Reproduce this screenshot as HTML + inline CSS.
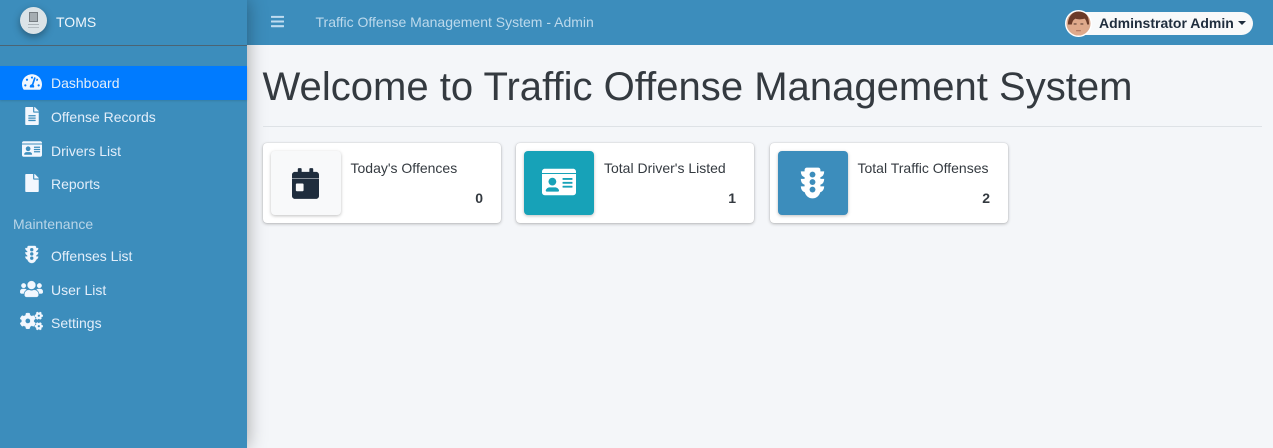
<!DOCTYPE html>
<html lang="en"><head><meta charset="utf-8"><title>TOMS</title>
<style>
html,body{margin:0;padding:0;width:1273px;height:448px;overflow:hidden;background:#f4f6f9;font-family:"Liberation Sans",sans-serif;color:#343a40}
.a{position:absolute;white-space:nowrap}
#nav{left:247px;top:0;width:1026px;height:45px;background:#3c8dbc}
#side{left:0;top:0;width:247px;height:448px;background:#3c8dbc;box-shadow:0 0 18px rgba(0,0,0,.35)}
#line{left:0;top:45px;width:247px;height:1px;background:#4b6474}
#act{left:0;top:66px;width:247px;height:34px;background:#007bff;box-shadow:0 1px 2px rgba(0,0,0,.12)}
.t{left:51px;font-size:14px;line-height:20px;color:#e3eefa}
svg{position:absolute;fill:#f2f7fe;stroke:#f2f7fe;stroke-width:12;display:block;overflow:visible}
.h{stroke:none;fill:#3c8dbc}
.card{top:143px;width:238px;height:80px;background:#fff;border-radius:4px;box-shadow:0 0 1px rgba(0,0,0,.2),0 1px 3px rgba(0,0,0,.25)}
.box{left:8px;top:8px;width:70px;height:64px;border-radius:4px;box-shadow:0 1px 3px rgba(0,0,0,.25)}
.ct{left:87.5px;top:15px;font-size:14px;line-height:20px;color:#343a40}
.n{right:18px;top:45px;font-size:14px;line-height:20px;font-weight:700;color:#343a40}
</style></head><body>
<div class="a" id="nav">
<svg style="left:24px;top:14px;fill:#bfdcf0;stroke:none" width="13" height="15" viewBox="0 0 448 512"><path d="M16 132h416c8.837 0 16-7.163 16-16V76c0-8.837-7.163-16-16-16H16C7.163 60 0 67.163 0 76v40c0 8.837 7.163 16 16 16zm0 160h416c8.837 0 16-7.163 16-16v-40c0-8.837-7.163-16-16-16H16c-8.837 0-16 7.163-16 16v40c0 8.837 7.163 16 16 16zm0 160h416c8.837 0 16-7.163 16-16v-40c0-8.837-7.163-16-16-16H16c-8.837 0-16 7.163-16 16v40c0 8.837 7.163 16 16 16z"/></svg>
<div class="a" style="left:68.5px;top:12px;font-size:14px;line-height:20px;color:#bcd9ec">Traffic Offense Management System - Admin</div>
</div>
<div class="a" id="side">
<div class="a" style="left:20px;top:7px;width:27px;height:27px;border-radius:50%;background:#dbe3e7;box-shadow:0 3px 8px rgba(0,0,0,.35)"></div>
<div class="a" style="left:29px;top:12px;width:9px;height:10px;background:#a5adb2;border:1px solid #767d82;box-sizing:border-box"></div>
<div class="a" style="left:28px;top:24px;width:11px;height:1px;background:#aab2b7"></div>
<div class="a" style="left:28px;top:27px;width:11px;height:1px;background:#b5bdc2"></div>
<div class="a" style="left:56px;top:12px;font-size:14px;line-height:20px;color:#f0f6fc">TOMS</div>
<div class="a" id="line"></div>
<div class="a" id="act"></div>

<svg style="left:21.5px;top:73px;stroke:none" width="20" height="18" viewBox="0 0 576 512"><path d="M288 32C128.94 32 0 160.94 0 320c0 52.8 14.25 102.26 39.06 144.8 5.61 9.62 16.3 15.2 27.44 15.2h443c11.14 0 21.83-5.58 27.44-15.2C561.75 422.26 576 372.8 576 320c0-159.06-128.94-288-288-288zm0 64c14.71 0 26.58 10.13 30.32 23.65-1.11 2.26-2.64 4.23-3.45 6.67l-9.22 27.67c-5.13 3.49-10.97 6.01-17.64 6.01-17.67 0-32-14.33-32-32S270.33 96 288 96zM96 384c-17.67 0-32-14.33-32-32s14.33-32 32-32 32 14.33 32 32-14.33 32-32 32zm48-160c-17.67 0-32-14.33-32-32s14.33-32 32-32 32 14.33 32 32-14.33 32-32 32zm246.77-72.41l-61.33 184C343.13 347.33 352 364.54 352 384c0 11.72-3.38 22.55-8.88 32H232.88c-5.5-9.45-8.88-20.28-8.88-32 0-33.94 26.5-61.43 59.9-63.59l61.34-184.01c4.17-12.56 17.73-19.45 30.36-15.17 12.57 4.19 19.35 17.79 15.17 30.36zm14.66 57.2l15.52-46.55c3.47-1.29 7.13-2.23 11.05-2.23 17.67 0 32 14.33 32 32s-14.33 32-32 32c-11.38-.01-20.89-6.28-26.57-15.22zM480 384c-17.67 0-32-14.33-32-32s14.33-32 32-32 32 14.33 32 32-14.33 32-32 32z"/></svg>
<div class="a t" style="top:73px">Dashboard</div>

<svg style="left:24.5px;top:106.5px;stroke:none" width="14" height="18" viewBox="0 0 384 512"><path d="M224 136V0H24C10.7 0 0 10.7 0 24v464c0 13.3 10.7 24 24 24h336c13.3 0 24-10.7 24-24V160H248c-13.2 0-24-10.8-24-24zm160-14.1v6.1H256V0h6.1c6.4 0 12.5 2.5 17 7l97.9 98c4.5 4.5 7 10.6 7 16.9z"/><g class="h"><rect x="88" y="232" width="208" height="36" rx="8"/><rect x="88" y="298" width="208" height="36" rx="8"/><rect x="88" y="364" width="208" height="36" rx="8"/></g></svg>
<div class="a t" style="top:107px">Offense Records</div>

<svg style="left:21.5px;top:140px;stroke:none" width="20" height="18" viewBox="0 0 576 512"><path d="M528 32H48C21.5 32 0 53.5 0 80v16h576V80c0-26.5-21.5-48-48-48zM0 432c0 26.5 21.5 48 48 48h480c26.5 0 48-21.5 48-48V128H0v304z"/><g class="h"><rect x="344" y="186" width="176" height="36" rx="6"/><rect x="344" y="252" width="176" height="36" rx="6"/><rect x="344" y="318" width="176" height="36" rx="6"/><circle cx="176" cy="250" r="68"/><path d="M62 396C72 366 98 346 128 346h96c30 0 56 20 66 50 3 12-5 26-18 26H80c-13 0-21-14-18-26z"/></g></svg>
<div class="a t" style="top:141px">Drivers List</div>

<svg style="left:24.5px;top:174px;stroke:none" width="14" height="18" viewBox="0 0 384 512"><path d="M224 136V0H24C10.7 0 0 10.7 0 24v464c0 13.3 10.7 24 24 24h336c13.3 0 24-10.7 24-24V160H248c-13.2 0-24-10.8-24-24zm160-14.1v6.1H256V0h6.1c6.4 0 12.5 2.5 17 7l97.9 98c4.5 4.5 7 10.6 7 16.9z"/></svg>
<div class="a t" style="top:174px">Reports</div>

<div class="a" style="left:13px;top:214px;font-size:14px;line-height:20px;color:#b9d5e8">Maintenance</div>

<svg style="left:24.5px;top:246px" width="13.5" height="17" viewBox="0 0 384 512"><path d="M384 192h-64v-37.88c37.2-13.22 64-48.38 64-90.12h-64V32c0-17.67-14.33-32-32-32H96C78.33 0 64 14.33 64 32v32H0c0 41.74 26.8 76.9 64 90.12V192H0c0 41.74 26.8 76.9 64 90.12V320H0c0 42.84 28.25 78.69 66.99 91.05C79.42 468.72 130.6 512 192 512s112.58-43.28 125.01-100.95C355.75 398.69 384 362.84 384 320h-64v-37.88c37.2-13.22 64-48.38 64-90.12z"/><g class="h"><circle cx="192" cy="112" r="50"/><circle cx="192" cy="240" r="50"/><circle cx="192" cy="368" r="50"/></g></svg>
<div class="a t" style="top:246px">Offenses List</div>

<svg style="left:20px;top:279.5px" width="23" height="18" viewBox="0 0 640 512"><path d="M96 224c35.3 0 64-28.7 64-64s-28.7-64-64-64-64 28.7-64 64 28.7 64 64 64zm448 0c35.3 0 64-28.7 64-64s-28.7-64-64-64-64 28.7-64 64 28.7 64 64 64zm32 32h-64c-17.6 0-33.5 7.1-45.1 18.6 40.3 22.1 68.9 62 75.1 109.4h66c17.7 0 32-14.3 32-32v-32c0-35.3-28.7-64-64-64zm-256 0c61.9 0 112-50.1 112-112S381.9 32 320 32 208 82.1 208 144s50.1 112 112 112zm76.8 32h-8.3c-20.8 10-43.9 16-68.5 16s-47.6-6-68.5-16h-8.3C179.6 288 128 339.6 128 403.2V432c0 26.5 21.5 48 48 48h288c26.5 0 48-21.5 48-48v-28.8c0-63.6-51.6-115.2-115.2-115.2zm-223.7-13.4C161.5 263.1 145.6 256 128 256H64c-35.3 0-64 28.7-64 64v32c0 17.7 14.3 32 32 32h65.9c6.3-47.4 34.9-87.3 75.2-109.4z"/></svg>
<div class="a t" style="top:280px">User List</div>

<svg style="left:20px;top:312px" width="23" height="18" viewBox="0 0 640 512"><path d="M512.1 191l-8.2 14.3c-3 5.3-9.4 7.5-15.1 5.4-11.8-4.4-22.6-10.7-32.1-18.6-4.6-3.8-5.8-10.5-2.8-15.7l8.2-14.3c-6.9-8-12.3-17.3-15.9-27.4h-16.5c-6 0-11.2-4.3-12.2-10.3-2-12-2.1-24.6 0-37.1 1-6 6.2-10.4 12.2-10.4h16.5c3.6-10.1 9-19.4 15.9-27.4l-8.2-14.3c-3-5.2-1.9-11.9 2.8-15.7 9.5-7.9 20.4-14.2 32.1-18.6 5.7-2.1 12.1.1 15.1 5.4l8.2 14.3c10.5-1.9 21.2-1.9 31.7 0L552 6.3c3-5.3 9.4-7.5 15.1-5.4 11.8 4.4 22.6 10.7 32.1 18.6 4.6 3.8 5.8 10.5 2.8 15.7l-8.2 14.3c6.9 8 12.3 17.3 15.9 27.4h16.5c6 0 11.2 4.3 12.2 10.3 2 12 2.1 24.6 0 37.1-1 6-6.2 10.4-12.2 10.4h-16.5c-3.6 10.1-9 19.4-15.9 27.4l8.2 14.3c3 5.2 1.9 11.9-2.8 15.7-9.5 7.9-20.4 14.2-32.1 18.6-5.7 2.1-12.1-.1-15.1-5.4l-8.2-14.3c-10.4 1.9-21.2 1.9-31.7 0zm-10.5-58.8c38.5 29.6 82.4-14.3 52.8-52.8-38.5-29.7-82.4 14.3-52.8 52.8zM386.3 286.1l33.7 16.8c10.1 5.8 14.5 18.1 10.5 29.1-8.9 24.2-26.4 46.4-42.6 65.8-7.4 8.9-20.2 11.1-30.3 5.3l-29.1-16.8c-16 13.7-34.6 24.6-54.9 31.7v33.6c0 11.6-8.3 21.6-19.7 23.6-24.6 4.2-50.4 4.4-75.9 0-11.5-2-20-11.9-20-23.6V418c-20.3-7.2-38.9-18-54.9-31.7L74 403c-10 5.8-22.9 3.6-30.3-5.3-16.2-19.4-33.3-41.6-42.2-65.7-4-10.9.4-23.2 10.5-29.1l33.3-16.8c-3.9-20.9-3.9-42.4 0-63.4L12 205.8c-10.1-5.8-14.6-18.1-10.5-29 8.9-24.2 26-46.4 42.2-65.8 7.4-8.9 20.2-11.1 30.3-5.3l29.1 16.8c16-13.7 34.6-24.6 54.9-31.7V57.1c0-11.5 8.2-21.5 19.6-23.5 24.6-4.2 50.5-4.4 76-.1 11.5 2 20 11.9 20 23.6v33.6c20.3 7.2 38.9 18 54.9 31.7l29.1-16.8c10-5.8 22.9-3.6 30.3 5.3 16.2 19.4 33.2 41.6 42.1 65.8 4 10.9.1 23.2-10 29.1l-33.7 16.8c3.9 21 3.9 42.5 0 63.5zm-117.6 21.1c59.2-77-28.7-164.9-105.7-105.7-59.2 77 28.7 164.9 105.7 105.7zm243.4 182.7l-8.2 14.3c-3 5.3-9.4 7.5-15.1 5.4-11.8-4.4-22.6-10.7-32.1-18.6-4.6-3.8-5.8-10.5-2.8-15.7l8.2-14.3c-6.9-8-12.3-17.3-15.9-27.4h-16.5c-6 0-11.2-4.3-12.2-10.3-2-12-2.1-24.6 0-37.1 1-6 6.2-10.4 12.2-10.4h16.5c3.6-10.1 9-19.4 15.9-27.4l-8.2-14.3c-3-5.2-1.9-11.9 2.8-15.7 9.5-7.9 20.4-14.2 32.1-18.6 5.7-2.1 12.1.1 15.1 5.4l8.2 14.3c10.5-1.9 21.2-1.9 31.7 0l8.2-14.3c3-5.3 9.4-7.5 15.1-5.4 11.8 4.4 22.6 10.7 32.1 18.6 4.6 3.8 5.8 10.5 2.8 15.7l-8.2 14.3c6.9 8 12.3 17.3 15.9 27.4h16.5c6 0 11.2 4.3 12.2 10.3 2 12 2.1 24.6 0 37.1-1 6-6.2 10.4-12.2 10.4h-16.5c-3.6 10.1-9 19.4-15.9 27.4l8.2 14.3c3 5.2 1.9 11.9-2.8 15.7-9.5 7.9-20.4 14.2-32.1 18.6-5.7 2.1-12.1-.1-15.1-5.4l-8.2-14.3c-10.4 1.9-21.2 1.9-31.7 0zM501.6 431c38.5 29.6 82.4-14.3 52.8-52.8-38.5-29.6-82.4 14.3-52.8 52.8z"/></svg>
<div class="a t" style="top:313px">Settings</div>
</div>

<!-- user pill -->
<div class="a" style="left:1067px;top:12px;width:186px;height:23px;border-radius:12px;background:#f8f9fa"></div>
<svg style="left:1065px;top:10px;fill:none;stroke:none" width="27" height="27" viewBox="0 0 28 28">
<circle cx="14" cy="14" r="14" fill="#fff"/>
<clipPath id="c"><circle cx="14" cy="14" r="12.5"/></clipPath>
<g clip-path="url(#c)"><rect width="28" height="28" fill="#dba98d"/><ellipse cx="14" cy="16" rx="9" ry="11" fill="#dfa98b"/><path d="M3 15C3 6 9 1 15 1c6 0 10 5 10 14l-2 0c-1-4-2-6-3-6-3 1-7 1-9 0-2 1-3 2-4 6z" fill="#6b3b29"/><rect x="9" y="14" width="3" height="1" fill="#4a3028"/><rect x="16" y="14" width="3" height="1" fill="#4a3028"/><rect x="11.5" y="21" width="5" height="1" fill="#a86a55"/></g></svg>
<div class="a" style="left:1099px;top:13px;font-size:14px;line-height:20px;font-weight:700;color:#1f2d3d">Adminstrator Admin</div>
<div class="a" style="left:1238px;top:21px;width:0;height:0;border-left:4px solid transparent;border-right:4px solid transparent;border-top:4px solid #1f2d3d"></div>

<div class="a" style="left:262.5px;top:61px;font-size:40.04px;line-height:52px;color:#343a40">Welcome to Traffic Offense Management System</div>
<div class="a" style="left:263px;top:126px;width:999px;height:1px;background:#dee2e6"></div>

<div class="a card" style="left:263px">
<div class="a box" style="background:#f8f9fa">
<svg style="left:21px;top:17px;fill:#1f2d3d;stroke:none" width="27" height="31" viewBox="0 0 448 512"><path d="M0 464c0 26.5 21.5 48 48 48h352c26.5 0 48-21.5 48-48V172H0v292zm64-192c0-8.8 7.2-16 16-16h96c8.8 0 16 7.2 16 16v96c0 8.8-7.2 16-16 16H80c-8.8 0-16-7.2-16-16v-96zM400 64h-48V16c0-8.8-7.2-16-16-16h-32c-8.8 0-16 7.2-16 16v48H160V16c0-8.8-7.2-16-16-16h-32c-8.8 0-16 7.2-16 16v48H48C21.5 64 0 85.5 0 112v52h448v-52c0-26.5-21.5-48-48-48z"/></svg></div>
<div class="a ct">Today's Offences</div><div class="a n">0</div></div>

<div class="a card" style="left:516px">
<div class="a box" style="background:#17a2b8">
<svg style="left:18px;top:15px;fill:#fff;stroke:none" width="34" height="32" viewBox="0 0 576 512"><path d="M528 32H48C21.5 32 0 53.5 0 80v24h576V80c0-26.5-21.5-48-48-48zM0 432c0 26.5 21.5 48 48 48h480c26.5 0 48-21.5 48-48V120H0v312z"/><g fill="#17a2b8"><rect x="348" y="188" width="168" height="32" rx="6"/><rect x="348" y="254" width="168" height="32" rx="6"/><rect x="348" y="320" width="168" height="32" rx="6"/><circle cx="176" cy="250" r="66"/><path d="M64 396C74 368 100 348 128 348h96c28 0 54 20 64 48 3 12-5 24-18 24H82c-13 0-21-12-18-24z"/></g></svg></div>
<div class="a ct" style="left:88px">Total Driver's Listed</div><div class="a n">1</div></div>

<div class="a card" style="left:770px">
<div class="a box" style="background:#3c8dbc">
<svg style="left:23px;top:17px;fill:#fff;stroke:#fff;stroke-width:14" width="23" height="30" viewBox="0 0 384 512"><path d="M384 192h-64v-37.88c37.2-13.22 64-48.38 64-90.12h-64V32c0-17.67-14.33-32-32-32H96C78.33 0 64 14.33 64 32v32H0c0 41.74 26.8 76.9 64 90.12V192H0c0 41.74 26.8 76.9 64 90.12V320H0c0 42.84 28.25 78.69 66.99 91.05C79.42 468.72 130.6 512 192 512s112.58-43.28 125.01-100.95C355.75 398.69 384 362.84 384 320h-64v-37.88c37.2-13.22 64-48.38 64-90.12z"/><g class="h"><circle cx="192" cy="112" r="50"/><circle cx="192" cy="240" r="50"/><circle cx="192" cy="368" r="50"/></g></svg></div>
<div class="a ct">Total Traffic Offenses</div><div class="a n">2</div></div>
</body></html>
